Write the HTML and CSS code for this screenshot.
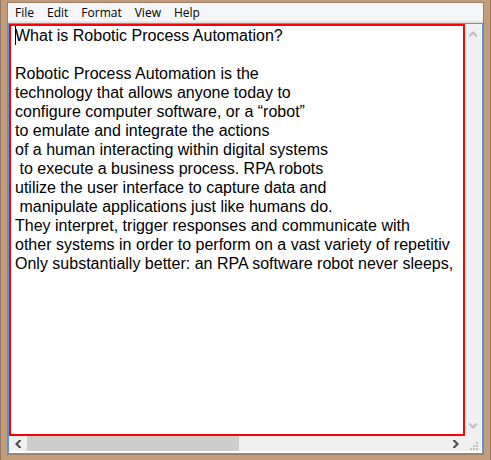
FILE: index.html
```html
<!DOCTYPE html>
<html lang="en">
<head>
<meta charset="utf-8">
<title>Notepad</title>
<link rel="stylesheet" href="styles.css">
</head>
<body>
<div class="frame">
  <main class="window">
    <nav class="menu" aria-label="Menu bar">
      <button type="button">File</button>
      <button type="button">Edit</button>
      <button type="button">Format</button>
      <button type="button">View</button>
      <button type="button">Help</button>
    </nav>
    <section class="client">
      <div class="editor">
        <textarea class="text" wrap="off" spellcheck="false" aria-label="Document text">What is Robotic Process Automation?

Robotic Process Automation is the
technology that allows anyone today to
configure computer software, or a “robot”
to emulate and integrate the actions
of a human interacting within digital systems
 to execute a business process. RPA robots
utilize the user interface to capture data and
 manipulate applications just like humans do.
They interpret, trigger responses and communicate with
other systems in order to perform on a vast variety of repetitiv
Only substantially better: an RPA software robot never sleeps,</textarea>
        <span class="caret"></span>
      </div>
      <div class="vbar">
        <button type="button" aria-label="Scroll up"><svg width="8" height="6" viewBox="0 0 8 6"><path d="M4 0L8 4V6H7L4 3L1 6H0V4Z"/></svg></button>
        <button type="button" aria-label="Scroll down"><svg width="8" height="6" viewBox="0 0 8 6"><path d="M4 6L8 2V0H7L4 3L1 0H0V2Z"/></svg></button>
      </div>
      <div class="hbar">
        <button type="button" aria-label="Scroll left"><svg width="6" height="8" viewBox="0 0 6 8"><path d="M0 4L4 0H6V1L3 4L6 7V8H4Z"/></svg></button>
        <div class="track"><div class="thumb"></div></div>
        <button type="button" aria-label="Scroll right"><svg width="6" height="8" viewBox="0 0 6 8"><path d="M6 4L2 0H0V1L3 4L0 7V8H2Z"/></svg></button>
      </div>
      <div class="grip">
        <svg width="8" height="8" viewBox="0 0 8 8" shape-rendering="crispEdges"><path d="M6 0h2v2H6zM3 3h2v2H3zM6 3h2v2H6zM0 6h2v2H0zM3 6h2v2H3zM6 6h2v2H6z"/></svg>
      </div>
    </section>
  </main>
</div>
</body>
</html>
```
FILE: styles.css
```css
* {
  box-sizing: border-box;
}

body {
  margin: 0;
}

button {
  margin: 0;
  padding: 0;
  border: 0;
  background: none;
  font: inherit;
  color: inherit;
}

.frame {
  display: flex;
  height: 100vh;
  padding: 2px 6px 5px;
  border: 0 solid #927863;
  border-width: 0 1px;
  background: #c39c7b;
}

.window {
  flex: 1;
  min-width: 0;
  display: flex;
  flex-direction: column;
  border: 1px solid #a07f65;
  background: #e6e6e6;
}

.menu {
  display: flex;
  gap: 13px;
  height: 20px;
  padding: 0 7px;
  border-bottom: 2px solid #e6e6e6;
  background: #f5f6f8;
  color: #000;
  font: 12px/20px "Open Sans", "Noto Sans", sans-serif;
}

.client {
  flex: 1;
  min-height: 0;
  display: grid;
  grid-template: minmax(0, 1fr) 17px / minmax(0, 1fr) 17px;
  border: 1px solid #5b97d8;
  background: #fff;
}

.editor {
  position: relative;
  display: flex;
  padding: 0 4px;
  border: 2px solid #f00;
}

.text {
  flex: 1;
  min-width: 0;
  margin: 0;
  padding: 0;
  border: 0;
  outline: 0;
  resize: none;
  overflow: hidden;
  background: #fff;
  color: #000;
  font: 16px/19px "Liberation Sans", Arial, sans-serif;
}

.caret {
  position: absolute;
  top: 0;
  left: 4px;
  width: 1px;
  height: 19px;
  background: #000;
}

.vbar,
.hbar {
  display: flex;
  justify-content: space-between;
  background: #f0f0f0;
}

.vbar {
  flex-direction: column;
  border-right: 1px solid #fff;
}

.vbar button,
.hbar button {
  flex: none;
  display: grid;
  place-items: center;
  width: 16px;
  height: 20px;
}

.hbar {
  border-bottom: 2px solid #fff;
}

.hbar button {
  width: 18px;
  height: 15px;
}

.vbar path {
  fill: #bfbfbf;
}

.hbar path {
  fill: #505050;
}

.track {
  flex: 1;
}

.thumb {
  width: 50.5%;
  height: 100%;
  background: #cdcdcd;
}

.grip {
  display: flex;
  align-items: flex-end;
  justify-content: flex-end;
  padding: 0 3px 1px 0;
  border: 0 solid #fff;
  border-width: 0 1px 2px 0;
  background: #f0f0f0;
}

.grip path {
  fill: #bfbfbf;
}
```
